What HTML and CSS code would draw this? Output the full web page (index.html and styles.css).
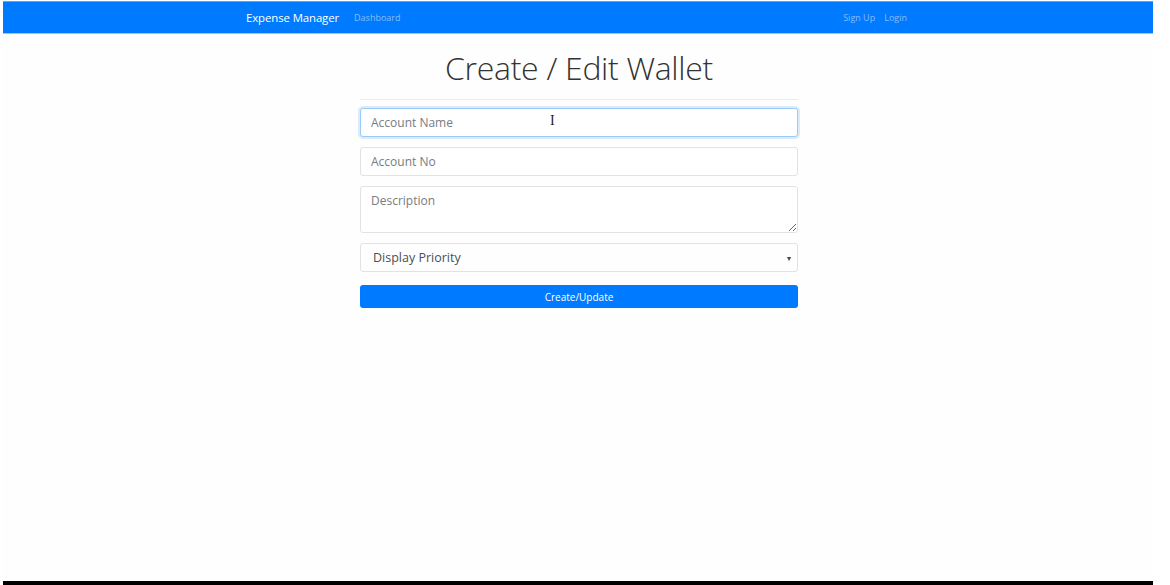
FILE: index.html
```html
<!DOCTYPE html>
<html lang="en">
<head>
<meta charset="utf-8">
<title>Create / Edit Wallet</title>
<link rel="stylesheet" href="styles.css">
</head>
<body>
<div class="frame">
  <nav class="navbar">
    <div class="nav-inner">
      <div class="nav-left">
        <a class="brand" href="#">Expense Manager</a>
        <a class="nav-link" href="#">Dashboard</a>
      </div>
      <div class="nav-right">
        <a class="nav-link" href="#">Sign Up</a>
        <a class="nav-link" href="#">Login</a>
      </div>
    </div>
  </nav>
  <main class="main">
    <div class="form-wrap">
      <h1 class="title">Create / Edit Wallet</h1>
      <hr class="rule">
      <form class="form">
        <div class="field-wrap">
          <input class="field focused" type="text" placeholder="Account Name">
          <span class="cursor">I</span>
        </div>
        <input class="field" type="text" placeholder="Account No">
        <textarea class="field area" placeholder="Description"></textarea>
        <div class="select">
          <span>Display Priority</span>
          <span class="caret">▾</span>
        </div>
        <button class="btn" type="button">Create/Update</button>
      </form>
    </div>
  </main>
  <div class="bottom-bar"></div>
</div>
</body>
</html>
```

FILE: styles.css
```css
html, body {
  margin: 0;
  padding: 0;
  background: #fff;
}
body {
  font-family: "Open Sans", "Noto Sans", sans-serif;
  width: 1170px;
  height: 585px;
  overflow: hidden;
}
.frame {
  width: 1150px;
  height: 585px;
  margin-left: 3px;
  display: flex;
  flex-direction: column;
  background: #fefefe;
}
.navbar {
  margin-top: 1px;
  height: 33px;
  background: #007bff;
  border-top: 1px solid #5aa6f5;
  border-bottom: 1px solid #9cc8f7;
  box-sizing: border-box;
  display: flex;
  justify-content: center;
}
.nav-inner {
  width: 661px;
  display: flex;
  justify-content: space-between;
  align-items: center;
  margin-left: -3px;
}
.nav-left, .nav-right {
  display: flex;
  align-items: center;
  gap: 15px;
}
.nav-right { gap: 9px; }
.brand {
  color: #fff;
  text-decoration: none;
  font-size: 11.4px;
  letter-spacing: -0.1px;
}
.nav-link {
  color: #86bdfb;
  text-decoration: none;
  font-size: 9px;
}
.main {
  flex: 1;
  display: flex;
  justify-content: center;
}
.form-wrap {
  width: 438px;
  margin-left: 2px;
}
.title {
  margin: 12px 0 0;
  font-weight: 300;
  font-size: 32px;
  line-height: 44px;
  color: #333;
  text-align: center;
  letter-spacing: -0.3px;
}
.rule {
  margin: 9px 0 8px;
  border: 0;
  border-top: 1px solid #ececec;
}
.form {
  display: flex;
  flex-direction: column;
  gap: 10px;
}
.field-wrap {
  position: relative;
}
.field {
  display: block;
  width: 100%;
  box-sizing: border-box;
  height: 29px;
  border: 1px solid #dfe2e6;
  border-radius: 3px;
  padding: 0 10px;
  font-family: inherit;
  font-size: 12px;
  color: #495057;
  background: #fff;
  outline: none;
  margin: 0;
}
.field::placeholder {
  color: #777c82;
}
.field.focused {
  border-color: #9ccaf8;
  box-shadow: 0 0 0 2px #dcebfc;
}
.area {
  height: 47px;
  padding-top: 5px;
  resize: vertical;
}
.cursor {
  position: absolute;
  left: 190px;
  top: 5px;
  font-family: "Liberation Serif", serif;
  font-size: 14px;
  color: #222;
}
.select {
  height: 29px;
  box-sizing: border-box;
  border: 1px solid #dfe2e6;
  border-radius: 3px;
  padding: 0 6px 0 12px;
  display: flex;
  align-items: center;
  justify-content: space-between;
  font-size: 12.5px;
  color: #495057;
}
.caret {
  font-size: 8px;
  color: #444;
}
.btn {
  margin-top: 3px;
  height: 23px;
  border: 0;
  border-radius: 3px;
  background: #007bff;
  color: #fff;
  font-family: inherit;
  font-size: 10px;
  padding: 0;
}
.bottom-bar {
  height: 4px;
  background: #000;
}
```
